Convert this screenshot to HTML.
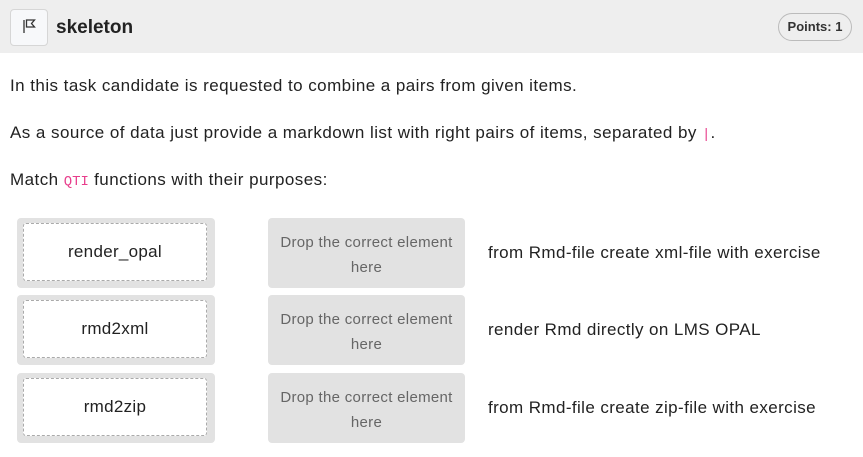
<!DOCTYPE html>
<html><head><style>
body{margin:0;width:863px;height:457px;background:#fff;font-family:"Liberation Sans",sans-serif;color:#222;overflow:hidden;position:relative}
.hdr{position:absolute;left:0;top:0;width:863px;height:53px;background:#eeeeee}
.ic{position:absolute;left:10px;top:9px;width:36px;height:35px;background:#f7f8fa;border:1px solid #d6d6d6;border-radius:4px}
.ttl{position:absolute;left:56px;top:17px;font-size:19px;font-weight:bold;color:#222}
.pts{position:absolute;left:778px;top:13px;width:72px;height:26px;border:1px solid #bbb;border-radius:14px;font-size:13px;font-weight:bold;text-align:center;line-height:26px;color:#333}
p{position:absolute;left:10px;margin:0;font-size:17px;letter-spacing:0.45px;color:#222}
code{font-family:"Liberation Mono",monospace;color:#e83e8c;font-size:14px;letter-spacing:0}
.ob{position:absolute;left:17px;width:198px;height:70px;background:#e2e2e2;border-radius:4px}
.ib{position:absolute;left:6px;top:5px;width:182px;height:56px;background:#fff;border:1px dashed #aaa;border-radius:3px;text-align:center;line-height:56px;font-size:17px;letter-spacing:0.3px}
.db{position:absolute;left:268px;width:197px;height:70px;background:#e2e2e2;border-radius:4px;color:#666;font-size:15px;letter-spacing:0.3px;text-align:center;line-height:25px;padding-top:12px;box-sizing:border-box}
.tx{position:absolute;left:488px;font-size:17px;letter-spacing:0.4px;line-height:70px}
</style></head><body>
<div class="hdr">
<div class="ic"><svg width="36" height="35" viewBox="0 0 36 35"><path d="M13 10v13M15.5 10h8l-3 3.5 3 3.5h-8z" stroke="#333" stroke-width="1.3" fill="none"/></svg></div>
<div class="ttl">skeleton</div>
<div class="pts">Points: 1</div>
</div>
<p style="top:76px">In this task candidate is requested to combine a pairs from given items.</p>
<p style="top:123px">As a source of data just provide a markdown list with right pairs of items, separated by <code>|</code>.</p>
<p style="top:170px">Match <code>QTI</code> functions with their purposes:</p>

<div class="ob" style="top:218px"><div class="ib">render_opal</div></div>
<div class="db" style="top:218px">Drop the correct element<br>here</div>
<div class="tx" style="top:218px">from Rmd-file create xml-file with exercise</div>

<div class="ob" style="top:295px"><div class="ib">rmd2xml</div></div>
<div class="db" style="top:295px">Drop the correct element<br>here</div>
<div class="tx" style="top:295px">render Rmd directly on LMS OPAL</div>

<div class="ob" style="top:373px"><div class="ib">rmd2zip</div></div>
<div class="db" style="top:373px">Drop the correct element<br>here</div>
<div class="tx" style="top:373px">from Rmd-file create zip-file with exercise</div>
</body></html>
